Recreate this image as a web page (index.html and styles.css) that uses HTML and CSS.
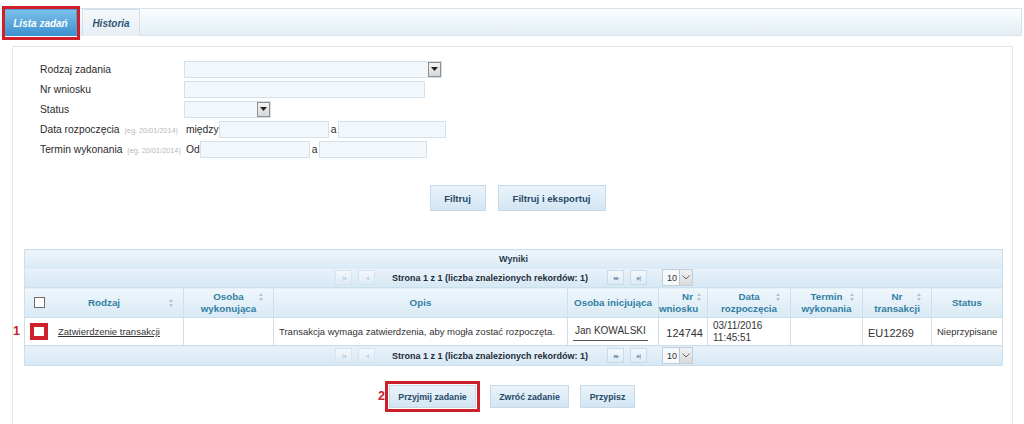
FILE: index.html
```html
<!DOCTYPE html>
<html lang="pl">
<head>
<meta charset="utf-8">
<title>Lista zadań</title>
<link rel="stylesheet" href="styles.css">
</head>
<body>
<div class="page">
  <div class="tabbar">
    <div class="tab active">Lista zadań</div>
    <div class="tab hist">Historia</div>
    <div class="mark mark-tab"></div>
  </div>

  <div class="panel">
    <div class="form">
      <div class="row">
        <div class="label">Rodzaj zadania</div>
        <div class="select sel-wide"><span class="arrow"><svg width="7" height="4" viewBox="0 0 7 4"><path d="M0 0h7L3.5 4z" fill="#222"/></svg></span></div>
      </div>
      <div class="row">
        <div class="label">Nr wniosku</div>
        <div class="input in-nr"></div>
      </div>
      <div class="row">
        <div class="label">Status</div>
        <div class="select sel-status"><span class="arrow"><svg width="7" height="4" viewBox="0 0 7 4"><path d="M0 0h7L3.5 4z" fill="#222"/></svg></span></div>
      </div>
      <div class="row">
        <div class="label">Data rozpoczęcia <span class="hint">(eg. 20/01/2014)</span></div>
        <span class="word">między</span><div class="input in-d1"></div><span class="word a">a</span><div class="input in-d2"></div>
      </div>
      <div class="row">
        <div class="label">Termin wykonania <span class="hint">(eg. 20/01/2014)</span></div>
        <span class="word">Od</span><div class="input in-d1"></div><span class="word a">a</span><div class="input in-d2"></div>
      </div>
    </div>

    <div class="actions filter-actions">
      <button class="btn btn-filter">Filtruj</button>
      <button class="btn btn-export">Filtruj i eksportuj</button>
    </div>

    <table class="grid">
      <colgroup>
        <col style="width:159px"><col style="width:90px"><col style="width:294px"><col style="width:91px"><col style="width:49px"><col style="width:83px"><col style="width:72px"><col style="width:69px"><col style="width:71px">
      </colgroup>
      <tr class="caption"><td colspan="9">Wyniki</td></tr>
      <tr class="pager"><td colspan="9">
        <div class="pager-in">
          <span class="pbtn dis">|◂</span><span class="pbtn dis">◂</span>
          <span class="ptext">Strona 1 z 1 (liczba znalezionych rekordów: 1)</span>
          <span class="pbtn">▸▸</span><span class="pbtn">▸|</span>
          <span class="psel">10<span class="parrow"><svg width="8" height="5" viewBox="0 0 8 5"><path d="M0.5 0.5L4 4L7.5 0.5" fill="none" stroke="#667" stroke-width="1"/></svg></span></span>
        </div>
      </td></tr>
      <tr class="head">
        <th class="c-rodzaj"><span class="cb"></span><span class="hl">Rodzaj</span><span class="sort"></span></th>
        <th>Osoba<br>wykonująca<span class="sort s-top"></span></th>
        <th>Opis</th>
        <th>Osoba inicjująca</th>
        <th class="right">Nr<br>wniosku<span class="sort s-top s-nr"></span></th>
        <th>Data<br>rozpoczęcia<span class="sort s-top"></span></th>
        <th>Termin<br>wykonania<span class="sort s-top s-term"></span></th>
        <th>Nr<br>transakcji<span class="sort s-top"></span></th>
        <th>Status</th>
      </tr>
      <tr class="data">
        <td class="c-rodzaj"><span class="num n1">1</span><span class="cb red"></span><a class="link">Zatwierdzenie transakcji</a></td>
        <td></td>
        <td class="pad">Transakcja wymaga zatwierdzenia, aby mogła zostać rozpoczęta.</td>
        <td class="pad"><span class="person">Jan KOWALSKI</span></td>
        <td class="right big">124744</td>
        <td class="pad date">03/11/2016<br>11:45:51</td>
        <td></td>
        <td class="pad big">EU12269</td>
        <td class="pad">Nieprzypisane</td>
      </tr>
      <tr class="pager"><td colspan="9">
        <div class="pager-in">
          <span class="pbtn dis">|◂</span><span class="pbtn dis">◂</span>
          <span class="ptext">Strona 1 z 1 (liczba znalezionych rekordów: 1)</span>
          <span class="pbtn">▸▸</span><span class="pbtn">▸|</span>
          <span class="psel">10<span class="parrow"><svg width="8" height="5" viewBox="0 0 8 5"><path d="M0.5 0.5L4 4L7.5 0.5" fill="none" stroke="#667" stroke-width="1"/></svg></span></span>
        </div>
      </td></tr>
    </table>

    <div class="actions bottom-actions">
      <span class="marked-wrap"><span class="num n2">2</span><button class="btn small marked b1">Przyjmij zadanie</button></span>
      <button class="btn small b2">Zwróć zadanie</button>
      <button class="btn small b3">Przypisz</button>
    </div>
  </div>
</div>
</body>
</html>
```

FILE: styles.css
```css
* { box-sizing: border-box; }
html, body { margin: 0; padding: 0; background: #fff; }
body {
  font-family: "Liberation Sans", Arial, sans-serif;
  color: #333;
  width: 1024px;
  height: 424px;
  overflow: hidden;
}
.page { padding-top: 8px; }

.tabbar {
  position: relative;
  display: flex;
  align-items: flex-end;
  gap: 5px;
  height: 28px;
  margin-right: 2px;
  padding-left: 4px;
  border: 1px solid #d6e3ec;
  border-left: none;
  background: linear-gradient(#fbfdfe, #e3eef6);
}
.tab {
  height: 27px;
  line-height: 27px;
  font-size: 10px;
  font-weight: bold;
  font-style: italic;
  color: #2f5576;
  text-align: center;
  white-space: nowrap;
  background: linear-gradient(#f4f8fb, #e6eff6);
  border: 1px solid #d3e0ea;
  border-bottom: none;
  margin-bottom: -1px;
}
.tab.active {
  width: 73px;
  color: #fff;
  background: linear-gradient(#7cc0ea, #3b90cf);
  border-color: #4f9bd2;
}
.tab.hist { width: 58px; }
.mark {
  position: absolute;
  border: 3px solid #cf1f2b;
}
.mark-tab { left: 2px; top: -3px; width: 78px; height: 34px; }

.panel {
  margin: 10px 11px 0 12px;
  height: 400px;
  border: 1px solid #e1e6ea;
  border-bottom: none;
  padding: 13px 0 0 27px;
}

.form { display: flex; flex-direction: column; gap: 2px; }
.row {
  display: flex;
  align-items: center;
  height: 18px;
  font-size: 10.3px;
  color: #2b2b2b;
}
.label { width: 144px; white-space: nowrap; }
.hint { font-size: 7.3px; color: #b4b9bd; margin-left: 2px; }
.input, .select {
  height: 17px;
  background: #f2f7fb;
  border: 1px solid #d2e1ec;
}
.select { position: relative; }
.arrow {
  position: absolute;
  right: 0; top: 0;
  width: 13px; height: 15px;
  background: linear-gradient(#f3f3f3, #d8d8d8);
  border: 1px solid #8e8e8e;
  display: flex; align-items: center; justify-content: center;
}
.sel-wide { width: 258px; }
.in-nr { width: 241px; }
.sel-status { width: 87px; }
.word { padding: 0 0 0 2px; }
.word.a { padding: 0 2px 0 2px; }
.in-d1 { width: 110px; }
.in-d2 { width: 108px; }

.actions { display: flex; justify-content: center; gap: 12px; }
.filter-actions { margin-top: 27px; padding-right: 17px; }
.btn {
  font-family: "Liberation Sans", Arial, sans-serif;
  font-weight: bold;
  font-size: 9.6px;
  color: #274a68;
  height: 26px;
  padding: 0;
  white-space: nowrap;
  text-align: center;
  background: linear-gradient(#eaf3fa, #d3e6f4);
  border: 1px solid #c6dae9;
  border-radius: 0;
}
.btn-filter { width: 56px; }
.btn-export { width: 108px; }

.grid {
  margin: 38px 0 0 -16px;
  width: 979px;
  border-collapse: collapse;
  table-layout: fixed;
  font-size: 9.5px;
}
.grid td, .grid th { border: 1px solid #cddfeb; padding: 0; }
.caption td {
  height: 18px;
  text-align: center;
  font-weight: bold;
  font-size: 9px;
  color: #2a3b4a;
  background: linear-gradient(#eef5fb, #dcebf6);
  border-bottom-color: #dce8f1;
}
.pager td {
  height: 20px;
  background: linear-gradient(#e9f2f9, #d6e8f5);
}
.pager-in {
  display: flex;
  align-items: center;
  padding-left: 310px;
  font-size: 9px;
  font-weight: bold;
  color: #1e2c38;
}
.pbtn {
  width: 17px; height: 15px;
  margin-right: 6px;
  border: 1px solid #cadbe8;
  background: linear-gradient(#f3f8fc, #dcebf6);
  font-size: 6px;
  color: #7a94b0;
  display: flex; align-items: center; justify-content: center;
  letter-spacing: -1px;
}
.pbtn.dis { color: #c5d2de; border-color: #d7e4ee; }
.ptext { margin: 0 19px 0 11px; white-space: nowrap; }
.psel {
  margin-left: 9px;
  width: 31px; height: 17px;
  background: #f6f9fc;
  border: 1px solid #bfcfdc;
  display: flex; align-items: center;
  padding-left: 4px;
  font-weight: normal;
  color: #333;
  position: relative;
}
.parrow {
  position: absolute; right: 0; top: 0; bottom: 0;
  width: 13px;
  background: linear-gradient(#f1f1f1, #dadada);
  border-left: 1px solid #b9c4cc;
  display: flex; align-items: center; justify-content: center;
}

.head th {
  position: relative;
  height: 30px;
  font-weight: bold;
  font-size: 9.8px;
  line-height: 12px;
  color: #327fa3;
  background: linear-gradient(#eff6fb, #d9eaf6);
  text-align: center;
}
.head th.right { text-align: right; padding-right: 14px; }
.head th.c-rodzaj { text-align: left; }
.head .cb { position: absolute; left: 9px; top: 9px; }
.head .hl { display: block; text-align: center; }
.cb {
  display: inline-block;
  width: 11px; height: 11px;
  border: 1px solid #6c6c6c;
  background: #fff;
}
.sort {
  position: absolute;
  right: 9px; top: 11px;
  width: 5px; height: 8px;
}
.sort::before, .sort::after {
  content: "";
  position: absolute;
  left: 0;
  border-left: 2.5px solid transparent;
  border-right: 2.5px solid transparent;
}
.sort::before { top: 0; border-bottom: 3px solid #b4c2cd; }
.sort::after { bottom: 0; border-top: 3px solid #b4c2cd; }
.sort.s-top { top: 5px; }
.sort.s-nr { right: 5px; }
.sort.s-term { right: 7px; }

.data td {
  height: 28px;
  color: #333;
  background: #fff;
  font-size: 9.5px;
  line-height: 12px;
}
.data td.pad { padding-left: 5px; }
.data td.right { text-align: right; padding-right: 4px; }
.data td.big { font-size: 11px; padding-top: 3px; }
.data td.date { font-size: 10px; }
.data td.c-rodzaj { position: relative; padding-left: 5px; white-space: nowrap; }
.cb.red {
  width: 18px; height: 17px;
  border: 4px solid #d0202d;
  background: #fff;
  vertical-align: middle;
  margin-right: 10px;
}
.link { color: #333; text-decoration: underline; font-size: 9.5px; vertical-align: middle; }
.person {
  display: inline-block;
  padding: 0 2px 3px;
  border-bottom: 1px solid #555;
  font-size: 10px;
  margin-top: 2px;
}
.num {
  position: absolute;
  color: #c8202c;
  font-weight: bold;
  font-size: 12.5px;
}
.n1 { left: -12px; top: 7px; }

.bottom-actions {
  margin-top: 19px;
  padding-right: 28px;
  gap: 0;
}
.marked-wrap { position: relative; display: flex; margin-right: 14px; }
.n2 { left: -11px; top: 4px; }
.btn.small { height: 23px; font-size: 8.8px; }
.b1 { width: 87px; }
.b2 { width: 79px; margin-right: 11px; }
.b3 { width: 55px; }
.btn.marked { box-shadow: 0 0 0 1px #fff, 0 0 0 4px #cf1f2b; }
```
